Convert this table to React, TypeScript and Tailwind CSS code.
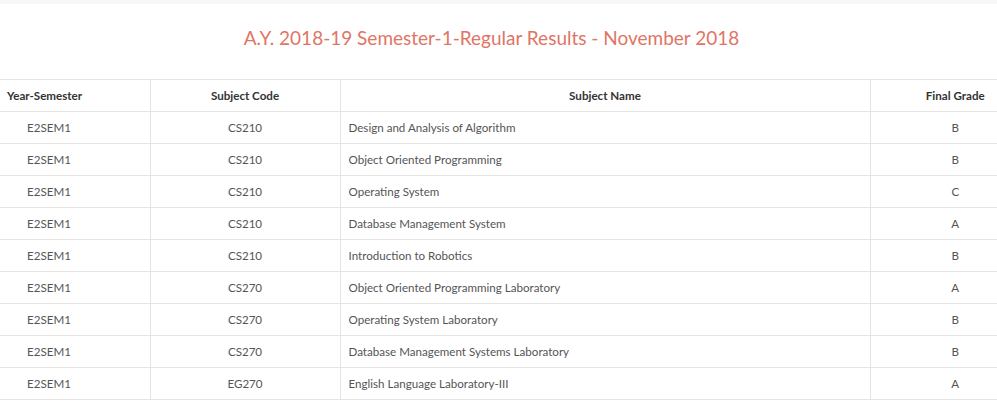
const rows: [string, string, string, string][] = [
  ["E2SEM1", "CS210", "Design and Analysis of Algorithm", "B"],
  ["E2SEM1", "CS210", "Object Oriented Programming", "B"],
  ["E2SEM1", "CS210", "Operating System", "C"],
  ["E2SEM1", "CS210", "Database Management System", "A"],
  ["E2SEM1", "CS210", "Introduction to Robotics", "B"],
  ["E2SEM1", "CS270", "Object Oriented Programming Laboratory", "A"],
  ["E2SEM1", "CS270", "Operating System Laboratory", "B"],
  ["E2SEM1", "CS270", "Database Management Systems Laboratory", "B"],
  ["E2SEM1", "EG270", "English Language Laboratory-III", "A"],
];

export default function App() {
  return (
    <div className="min-h-screen bg-white font-['Lato',sans-serif] text-[#555]">
      <div className="h-[4px] bg-[#f7f7f7]" />
      <h2 className="pt-[18px] pr-[14px] pb-[25px] text-center text-[19px] leading-[32px] text-[#e07565]">
        A.Y. 2018-19 Semester-1-Regular Results - November 2018
      </h2>
      <table className="w-full table-fixed border-collapse text-[11.6px]">
        <colgroup>
          <col className="w-[150px]" />
          <col className="w-[190px]" />
          <col className="w-[530px]" />
          <col />
        </colgroup>
        <thead>
          <tr className="h-[32px] border-y border-[#e4e4e4] font-bold text-[#333]">
            <th className="pl-[7px] text-left">Year-Semester</th>
            <th className="border-l border-[#e4e4e4] text-center">Subject Code</th>
            <th className="border-l border-[#e4e4e4] text-center">Subject Name</th>
            <th className="border-l border-[#e4e4e4] pl-[47px] pr-[4px] text-center">Final Grade</th>
          </tr>
        </thead>
        <tbody>
          {rows.map((r, i) => (
            <tr key={i} className="h-[32px] border-b border-[#e4e4e4]">
              <td className="pl-[27px]">{r[0]}</td>
              <td className="border-l border-[#e4e4e4] text-center">{r[1]}</td>
              <td className="border-l border-[#e4e4e4] pl-[8px]">{r[2]}</td>
              <td className="border-l border-[#e4e4e4] pl-[47px] pr-[4px] text-center">{r[3]}</td>
            </tr>
          ))}
        </tbody>
      </table>
    </div>
  );
}
